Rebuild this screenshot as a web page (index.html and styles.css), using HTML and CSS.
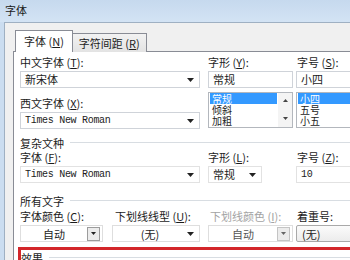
FILE: index.html
```html
<!DOCTYPE html>
<html lang="zh-CN">
<head>
    <meta charset="UTF-8">
    <meta name="viewport" content="width=device-width, initial-scale=1.0">
    <title>字体</title>
    <link rel="stylesheet" href="styles.css">
</head>
<body>
    <div class="titlebar">字体</div>
    <div class="frame">
        <div class="tabs">
            <div class="tab active">字体 (<u>N</u>)</div>
            <div class="tab">字符间距 (<u>R</u>)</div>
        </div>
        <div class="panel">
            <div class="fonts">
                <div class="col col-wide">
                    <div class="label">中文字体 (<u>T</u>):</div>
                    <div class="combo">新宋体<svg class="arrow" width="7" height="4"><path d="M0 0h7L3.5 4z"/></svg></div>
                    <div class="label spaced">西文字体 (<u>X</u>):</div>
                    <div class="combo mono">Times New Roman<svg class="arrow" width="7" height="4"><path d="M0 0h7L3.5 4z"/></svg></div>
                </div>
                <div class="col col-mid">
                    <div class="label">字形 (<u>Y</u>):</div>
                    <div class="textbox">常规</div>
                    <div class="listbox">
                        <ul>
                            <li class="selected">常规</li>
                            <li>倾斜</li>
                            <li>加粗</li>
                        </ul>
                        <div class="scroll">
                            <svg width="5" height="3"><path d="M0 3h5L2.5 0z"/></svg>
                            <svg width="5" height="3"><path d="M0 0h5L2.5 3z"/></svg>
                        </div>
                    </div>
                </div>
                <div class="col col-right">
                    <div class="label">字号 (<u>S</u>):</div>
                    <div class="textbox">小四</div>
                    <div class="listbox">
                        <ul>
                            <li class="selected">小四</li>
                            <li>五号</li>
                            <li>小五</li>
                        </ul>
                    </div>
                </div>
            </div>

            <div class="group">复杂文种</div>
            <div class="row">
                <div class="col col-wide">
                    <div class="label">字体 (<u>F</u>):</div>
                    <div class="combo flat mono">Times New Roman<svg class="arrow" width="7" height="4"><path d="M0 0h7L3.5 4z"/></svg></div>
                </div>
                <div class="col col-style">
                    <div class="label">字形 (<u>L</u>):</div>
                    <div class="combo flat">常规<svg class="arrow" width="7" height="4"><path d="M0 0h7L3.5 4z"/></svg></div>
                </div>
                <div class="col col-right">
                    <div class="label">字号 (<u>Z</u>):</div>
                    <div class="combo flat mono">10</div>
                </div>
            </div>

            <div class="group wide-gap">所有文字</div>
            <div class="row">
                <div class="col col-color">
                    <div class="label">字体颜色 (<u>C</u>):</div>
                    <div class="picker">
                        <span class="value">自动</span>
                        <span class="drop"><svg width="5" height="3"><path d="M0 0h5L2.5 3z"/></svg></span>
                    </div>
                </div>
                <div class="col col-line">
                    <div class="label">下划线线型 (<u>U</u>):</div>
                    <div class="picker">
                        <span class="value">(无)</span>
                        <svg class="arrow" width="7" height="4"><path d="M0 0h7L3.5 4z"/></svg>
                    </div>
                </div>
                <div class="col col-mid">
                    <div class="label disabled">下划线颜色 (<u>I</u>):</div>
                    <div class="picker muted">
                        <span class="value">自动</span>
                        <span class="drop"><svg width="5" height="3"><path d="M0 0h5L2.5 3z"/></svg></span>
                    </div>
                </div>
                <div class="col col-right">
                    <div class="label">着重号:</div>
                    <div class="picker raised"><span class="value">(无)</span></div>
                </div>
            </div>

            <div class="effects">
                <div class="group">效果</div>
            </div>
        </div>
    </div>
</body>
</html>
```

FILE: styles.css
```css
body {
    margin: 0;
    width: 350px;
    height: 260px;
    overflow: hidden;
    background-color: #cbddf0;
    font-family: "Noto Sans CJK SC", sans-serif;
    font-size: 11px;
    color: #1c1c1c;
}
u {
    text-decoration: underline;
    text-underline-offset: 1px;
}
.titlebar {
    height: 22px;
    line-height: 21px;
    padding-left: 5px;
    background: linear-gradient(to bottom, #c6d9ee, #d3e3f4);
    color: #1a1a1a;
}
.frame {
    margin-left: 4px;
    width: 400px;
    height: 260px;
    padding: 9px 0 0 8px;
    border-top: 1px solid #9fb0c2;
    border-left: 1px solid #9fb0c2;
    background-color: #f0f0f0;
}
.tabs {
    display: flex;
    align-items: flex-end;
    height: 20px;
    margin-bottom: -1px;
    padding-left: 2px;
}
.tab {
    height: 19px;
    line-height: 18px;
    padding: 0 6px;
    box-sizing: border-box;
    border: 1px solid #898c95;
    border-bottom: none;
    background: linear-gradient(to bottom, #f2f2f2, #e3e3e3);
    white-space: nowrap;
}
.tab.active {
    position: relative;
    z-index: 1;
    height: 22px;
    line-height: 20px;
    padding: 0 8px;
    margin-right: -1px;
    background: #fff;
}
.panel {
    padding: 4px 0 0 6px;
    border: 1px solid #898c95;
    background-color: #fff;
    height: 300px;
}
.fonts, .row {
    display: flex;
}
.col {
    display: flex;
    flex-direction: column;
    flex: none;
}
.col-wide { width: 180px; margin-right: 8px; }
.col-mid { width: 85px; margin-right: 3px; }
.col-style { width: 54px; margin-right: 34px; }
.col-right { width: 80px; }
.col-color { width: 83px; margin-right: 9px; }
.col-line { width: 88px; margin-right: 8px; }
.label {
    height: 13px;
    line-height: 13px;
    white-space: nowrap;
}
.label.spaced { margin-top: 9px; }
.label.disabled { color: #a3a3a3; padding-left: 2px; }
.col-line .label { padding-left: 3px; }
.col-right .label { padding-left: 1px; }
.combo, .textbox {
    height: 17px;
    margin-top: 2px;
    padding: 0 5px 0 4px;
    box-sizing: border-box;
    border: 1px solid #cfd3d9;
    display: flex;
    align-items: center;
    justify-content: space-between;
    line-height: 15px;
    white-space: nowrap;
}
.combo.flat {
    border-color: #e2e2e2;
}
.mono {
    font-family: "Liberation Mono", monospace;
    font-size: 10px;
    letter-spacing: -0.3px;
}
.arrow {
    flex: none;
    fill: #222;
}
.listbox {
    display: flex;
    height: 36px;
    margin-top: 4px;
    box-sizing: border-box;
    border: 1px solid #b3b7bd;
    background: #fff;
}
.listbox ul {
    flex: 1;
    margin: 0;
    padding: 0 1px;
    list-style: none;
}
.listbox li {
    height: 11px;
    line-height: 11px;
    font-size: 10px;
    padding-left: 2px;
}
.listbox li.selected {
    background-color: #3399ff;
    color: #fff;
}
.scroll {
    width: 14px;
    display: flex;
    flex-direction: column;
    justify-content: space-between;
    align-items: center;
    padding: 6px 0 7px;
    background: #f4f4f4;
    fill: #444;
}
.group {
    display: flex;
    align-items: center;
    height: 13px;
    margin-top: 7px;
    white-space: nowrap;
}
.group::after {
    content: "";
    flex: 1;
    margin-left: 6px;
    border-top: 1px solid #d8dde2;
}
.group.wide-gap { margin-top: 11px; }
.row .label { margin-top: 2px; }
.group.wide-gap + .row .label { margin-top: 3px; }
.picker {
    height: 17px;
    margin-top: 2px;
    box-sizing: border-box;
    border: 1px solid #dedede;
    display: flex;
    align-items: center;
    padding-right: 5px;
}
.picker .value {
    flex: 1;
    text-align: center;
}
.picker .drop {
    width: 13px;
    height: 14px;
    box-sizing: border-box;
    border: 1px solid #9c9c9c;
    background: #ececec;
    display: flex;
    align-items: center;
    justify-content: center;
    fill: #222;
    margin-right: -3px;
}
.picker.muted .value { color: #555; }
.picker.muted .drop { border-color: #c4c4c4; fill: #666; }
.picker.raised {
    border: 1px solid #a9a9a9;
    border-radius: 2px;
    background: linear-gradient(to bottom, #fbfbfb, #ececec);
    padding-left: 5px;
}
.picker.raised .value { text-align: left; }
.effects {
    margin: 5px 0 0 -2px;
    padding: 1px 0 0 0;
    border-top: 3px solid #d3262a;
    border-left: 3px solid #d3262a;
}
.effects .group { margin-top: 0; }
```
